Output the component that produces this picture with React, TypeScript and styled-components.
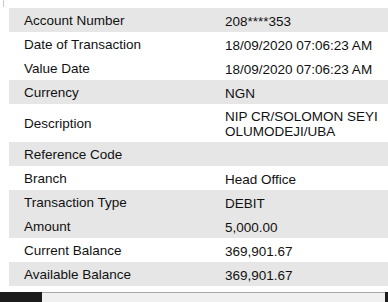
import React from "react";
import styled, { createGlobalStyle } from "styled-components";

const Global = createGlobalStyle`
  html, body { margin: 0; padding: 0; background: #ffffff; }
  body { width: 388px; height: 302px; overflow: hidden; }
`;

const Page = styled.div`
  width: 388px;
  height: 302px;
  display: flex;
  flex-direction: column;
  font-family: "Liberation Sans", Arial, sans-serif;
  font-size: 13.5px;
  color: #111;
`;

const TopGap = styled.div`
  height: 8px;
  padding-left: 3px;
  box-sizing: border-box;
`;

const Tick = styled.div`
  width: 1px;
  height: 7px;
  background: #c8c8c8;
`;

const Table = styled.div`
  margin-left: 9px;
  display: flex;
  flex-direction: column;
`;

const Row = styled.div<{ $shaded?: boolean; $tall?: boolean }>`
  display: grid;
  grid-template-columns: 216px 1fr;
  align-items: center;
  box-sizing: border-box;
  padding-top: 2px;
  min-height: ${(p) => (p.$tall ? "38px" : "24px")};
  background: ${(p) => (p.$shaded ? "#e6e6e6" : "#ffffff")};
`;

const Label = styled.div`
  padding-left: 15px;
  line-height: 16px;
`;

const Value = styled.div`
  line-height: 15px;
  padding-right: 8px;
`;

const Spacer = styled.div`
  height: 6px;
`;

const Footer = styled.div`
  display: flex;
  height: 10px;
`;

const DarkBlock = styled.div`
  width: 42px;
  background: #1c1c1c;
`;

const Bar = styled.div`
  flex: 1;
  background: #f0f0f0;
  border-top: 1px solid #a8a8a8;
`;

const Edge = styled.div`
  width: 3px;
  background: #1c1c1c;
`;

const rows: { label: string; value: React.ReactNode; shaded?: boolean; tall?: boolean }[] = [
  { label: "Account Number", value: "208****353", shaded: true },
  { label: "Date of Transaction", value: "18/09/2020 07:06:23 AM" },
  { label: "Value Date", value: "18/09/2020 07:06:23 AM" },
  { label: "Currency", value: "NGN", shaded: true },
  {
    label: "Description",
    value: (
      <>
        NIP CR/SOLOMON SEYI
        <br />
        OLUMODEJI/UBA
      </>
    ),
    tall: true,
  },
  { label: "Reference Code", value: "", shaded: true },
  { label: "Branch", value: "Head Office" },
  { label: "Transaction Type", value: "DEBIT", shaded: true },
  { label: "Amount", value: "5,000.00", shaded: true },
  { label: "Current Balance", value: "369,901.67" },
  { label: "Available Balance", value: "369,901.67", shaded: true },
];

export default function App() {
  return (
    <>
      <Global />
      <Page>
        <TopGap>
          <Tick />
        </TopGap>
        <Table>
          {rows.map((r) => (
            <Row key={r.label} $shaded={r.shaded} $tall={r.tall}>
              <Label>{r.label}</Label>
              <Value>{r.value}</Value>
            </Row>
          ))}
        </Table>
        <Spacer />
        <Footer>
          <DarkBlock />
          <Bar />
          <Edge />
        </Footer>
      </Page>
    </>
  );
}
